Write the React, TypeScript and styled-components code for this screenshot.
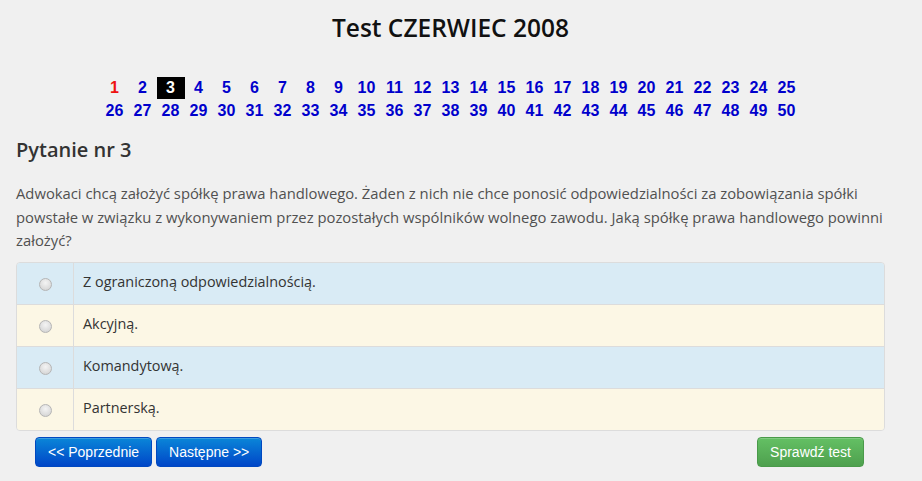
import React from "react";
import styled, { createGlobalStyle } from "styled-components";

const GlobalStyle = createGlobalStyle`
  html, body {
    margin: 0;
    padding: 0;
    background-color: #f0f0f0;
    font-family: "Open Sans", "Noto Sans", sans-serif;
  }
`;

const Page = styled.div`
  width: 869px;
  margin-left: 16px;
  padding-top: 12px;
`;

const Title = styled.h1`
  margin: 0;
  text-align: center;
  font-size: 24.5px;
  font-weight: 600;
  line-height: 32px;
  color: #111;
`;

const Numbers = styled.div`
  display: grid;
  grid-template-columns: repeat(25, 28px);
  grid-auto-rows: 23px;
  justify-content: center;
  margin-top: 33px;
`;

const NumLink = styled.a<{ $state: "done" | "current" | "normal" }>`
  display: flex;
  align-items: center;
  justify-content: center;
  font-family: "Liberation Sans", Arial, sans-serif;
  font-weight: bold;
  font-size: 16px;
  text-decoration: none;
  cursor: pointer;
  color: ${(p) =>
    p.$state === "done" ? "#ee1111" : p.$state === "current" ? "#fff" : "#0000cc"};
  background: ${(p) => (p.$state === "current" ? "#000" : "transparent")};
  height: 22px;
`;

const Heading = styled.h2`
  margin: 13px 0 0;
  font-size: 20px;
  font-weight: 600;
  line-height: 28px;
  color: #333;
`;

const Question = styled.p`
  margin: 18px 0 0;
  font-size: 14.8px;
  line-height: 23.5px;
  color: #505050;
`;

const Answers = styled.div`
  margin-top: 9px;
  border: 1px solid #dcdcdc;
  border-radius: 4px;
  overflow: hidden;
`;

const Row = styled.label<{ $tone: "info" | "warn" }>`
  display: grid;
  grid-template-columns: 57px 1fr;
  height: 41px;
  background: ${(p) => (p.$tone === "info" ? "#d9ebf5" : "#fcf7e5")};
  & + & {
    border-top: 1px solid #dcdcdc;
  }
  cursor: pointer;
`;

const RadioCell = styled.div`
  display: flex;
  align-items: center;
  justify-content: center;
  border-right: 1px solid #dcdcdc;
  padding-top: 2px;
`;

const Radio = styled.span`
  width: 11px;
  height: 11px;
  border-radius: 50%;
  border: 1px solid #b5b5b5;
  background: radial-gradient(circle at 50% 35%, #f4f4f4 0%, #dadada 70%, #c8c8c8 100%);
`;

const AnswerText = styled.div`
  display: flex;
  align-items: center;
  padding-left: 9px;
  font-size: 14.4px;
  color: #333;
  padding-bottom: 4px;
`;

const Footer = styled.div`
  display: flex;
  align-items: center;
  padding: 6px 21px 0 19px;
  gap: 4px;
`;

const Button = styled.button<{ $variant: "primary" | "success" }>`
  height: 30px;
  padding: 0 12px;
  border-radius: 4px;
  font-family: "Liberation Sans", Arial, sans-serif;
  font-size: 14px;
  color: #fff;
  cursor: pointer;
  border: 1px solid
    ${(p) => (p.$variant === "primary" ? "#0048c0" : "#4a9a4a")};
  background: ${(p) =>
    p.$variant === "primary"
      ? "linear-gradient(#0a86d8, #0046c8)"
      : "linear-gradient(#64c064, #4ea04e)"};
  box-shadow: inset 0 1px 0 rgba(255, 255, 255, 0.2);
`;

const Spacer = styled.div`
  flex: 1;
`;

const answers: { text: string; tone: "info" | "warn" }[] = [
  { text: "Z ograniczoną odpowiedzialnością.", tone: "info" },
  { text: "Akcyjną.", tone: "warn" },
  { text: "Komandytową.", tone: "info" },
  { text: "Partnerską.", tone: "warn" },
];

export default function App() {
  const nums = Array.from({ length: 50 }, (_, i) => i + 1);
  return (
    <>
      <GlobalStyle />
      <Page>
        <Title>Test CZERWIEC 2008</Title>
        <Numbers>
          {nums.map((n) => (
            <NumLink
              key={n}
              $state={n === 1 ? "done" : n === 3 ? "current" : "normal"}
            >
              {n}
            </NumLink>
          ))}
        </Numbers>
        <Heading>Pytanie nr 3</Heading>
        <Question>
          Adwokaci chcą założyć spółkę prawa handlowego. Żaden z nich nie chce
          ponosić odpowiedzialności za zobowiązania spółki powstałe w związku z
          wykonywaniem przez pozostałych wspólników wolnego zawodu. Jaką spółkę
          prawa handlowego powinni założyć?
        </Question>
        <Answers>
          {answers.map((a) => (
            <Row key={a.text} $tone={a.tone}>
              <RadioCell>
                <Radio />
              </RadioCell>
              <AnswerText>{a.text}</AnswerText>
            </Row>
          ))}
        </Answers>
        <Footer>
          <Button $variant="primary">&lt;&lt; Poprzednie</Button>
          <Button $variant="primary">Następne &gt;&gt;</Button>
          <Spacer />
          <Button $variant="success">Sprawdź test</Button>
        </Footer>
      </Page>
    </>
  );
}
